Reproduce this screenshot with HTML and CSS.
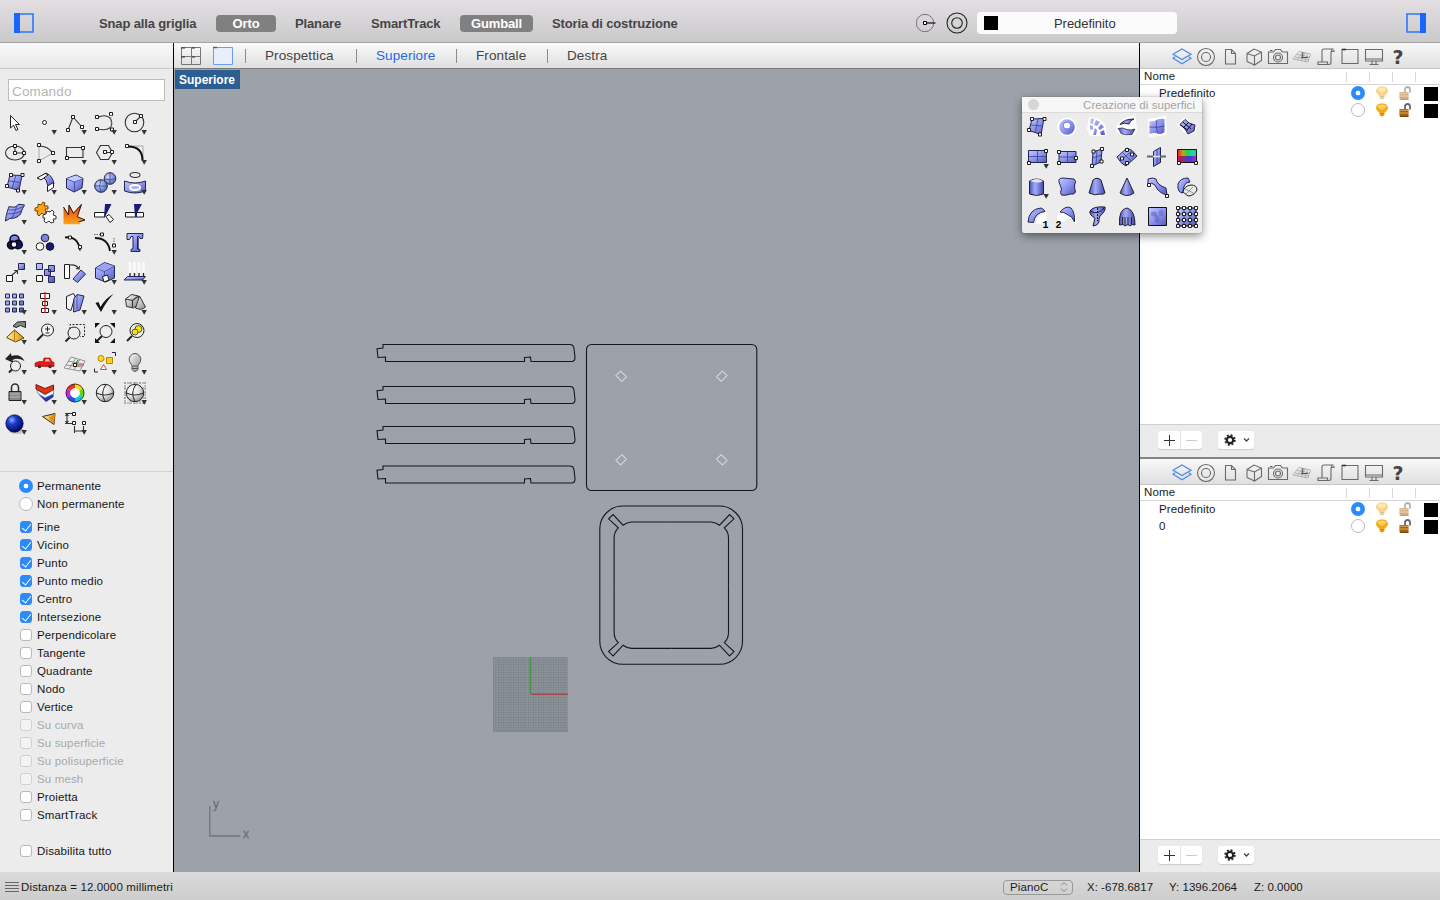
FILE: index.html
```html
<!DOCTYPE html>
<html lang="it">
<head>
<meta charset="utf-8">
<title>Superiore</title>
<link rel="stylesheet" href="styles.css">
</head>
<body>
<svg class="defs" aria-hidden="true">
  <defs>
    <linearGradient id="gb" x1="0" y1="0" x2="1" y2="1"><stop offset="0" stop-color="#c3c8ff"/><stop offset=".5" stop-color="#8d95ee"/><stop offset="1" stop-color="#5058bd"/></linearGradient>
    <linearGradient id="gh" x1="0" y1="0" x2="1" y2="0"><stop offset="0" stop-color="#4b53b5"/><stop offset=".4" stop-color="#a5abfa"/><stop offset="1" stop-color="#4048a8"/></linearGradient>
    <linearGradient id="gg" x1="0" y1="0" x2="1" y2="1"><stop offset="0" stop-color="#fff"/><stop offset="1" stop-color="#888"/></linearGradient>
    <linearGradient id="go" x1="0" y1="0" x2="0" y2="1"><stop offset="0" stop-color="#e23c0c"/><stop offset="1" stop-color="#ffa51d"/></linearGradient>
    <linearGradient id="gy" x1="0" y1="0" x2="1" y2="0"><stop offset="0" stop-color="#fff0a0"/><stop offset="1" stop-color="#dc9200"/></linearGradient>
    <linearGradient id="rainbow"><stop offset="0" stop-color="#f02020"/><stop offset=".3" stop-color="#b0b020"/><stop offset=".5" stop-color="#20d040"/><stop offset=".8" stop-color="#20d8a0"/><stop offset="1" stop-color="#20c0e0"/></linearGradient>
    <linearGradient id="rainbow2"><stop offset="0" stop-color="#e01030"/><stop offset=".45" stop-color="#7030a0"/><stop offset=".7" stop-color="#3040e0"/><stop offset="1" stop-color="#e020c0"/></linearGradient>
    <radialGradient id="ball" cx=".35" cy=".3" r=".7"><stop offset="0" stop-color="#8fb0ff"/><stop offset=".35" stop-color="#1c3fd0"/><stop offset="1" stop-color="#000a60"/></radialGradient>
    <radialGradient id="sph" cx=".35" cy=".35" r=".75"><stop offset="0" stop-color="#c9dcff"/><stop offset="1" stop-color="#4c60c4"/></radialGradient>
    <radialGradient id="gs" cx=".35" cy=".3" r=".8"><stop offset="0" stop-color="#fff"/><stop offset=".5" stop-color="#e4e4e4"/><stop offset="1" stop-color="#888"/></radialGradient>
    <symbol id="tri" viewBox="0 0 30 30"><path d="M21.500 22h5.400l-2.700 4.800z" fill="#333"/></symbol>
    <symbol id="i-layers" viewBox="0 0 22 22"><path d="M11 3l9 5.300-9 5.300-9-5.300zM4.200 10.800L2 12.300l9 5.500 9-5.500-2.200-1.500" fill="none" stroke="#4a87ee" stroke-width="1.200"/></symbol>
    <symbol id="i-ring" viewBox="0 0 22 22"><g class="gs"><circle cx="11" cy="11" r="8.500"/><circle cx="11" cy="11" r="4.500"/></g></symbol>
    <symbol id="i-doc" viewBox="0 0 22 22"><path class="gs" d="M6.500 3.500h6l4 4v10.500H6.500zM12.500 3.500v4h4"/></symbol>
    <symbol id="i-cube" viewBox="0 0 22 22"><path class="gs" d="M4 7.500l7-4.500 7.500 3v8.500l-7 4.500L4 15.500zM4 7.500l7.500 2.500 7-4M11.500 10V19"/></symbol>
    <symbol id="i-cam" viewBox="0 0 22 22"><g class="gs"><path d="M1.500 6h5l2-2.500h5L15.500 6h5v11.500h-19z"/><circle cx="11" cy="11.500" r="4.500"/><circle cx="11" cy="11.500" r="2.500"/><path d="M3 4.500h2.500"/></g></symbol>
    <symbol id="i-plane" viewBox="0 0 22 22"><g fill="none" stroke="#a2a2a2" stroke-width=".8"><path d="M2 13l15 3 2.500-8L8 5.500zM4 11l14 3M6 8.500l13 2.500M6 14l5.500-8M10.500 15l3.500-8.500M14 15.500l2.500-8"/><path d="M11 11.500l1-5M10 11.500l7 0" stroke="#555" stroke-width="1.200"/></g></symbol>
    <symbol id="i-scroll" viewBox="0 0 22 22"><path class="gs" d="M7 15.500V5c0-1.500 1-2 2-2h9.500c-1.500 0-2 1-2 2.500h2.500V4M16 5.500v10.500c0 1.500-1 2.500-2 2.500H3V16h9.500v2.500"/></symbol>
    <symbol id="i-win" viewBox="0 0 22 22"><path class="gs" d="M3 3.500h16v14H3z"/><path d="M3 3.500h4" stroke="#333" stroke-width="1.600"/></symbol>
    <symbol id="i-mon" viewBox="0 0 22 22"><path class="gs" d="M2.500 3.500h17v11.500h-17zM2.500 13h17M9 15v3M13 15v3M6.500 18.500h9"/></symbol>
    <symbol id="bulb" viewBox="0 0 14 16"><path d="M7 1.500c4 0 6 2 6 4.500 0 2.200-2.500 3.500-3.500 5v2L7 14.500 4.500 13v-2C3.500 9.500 1 8.200 1 6c0-2.500 2-4.500 6-4.500z" fill="#f5a71c"/><path d="M7 2.500c3 0 4.500 1 4.500 2.500L7 8 2.500 5C2.500 3.500 4 2.500 7 2.500z" fill="#ffd25d"/><path d="M5 11.500h4M5.500 13.300h3" stroke="#b98a3a"/></symbol>
    <symbol id="lock" viewBox="0 0 14 16"><path d="M7 8V4.500c0-1.500 1-2.500 2.500-2.500S12 3 12 4.500v3" fill="none" stroke="#676778" stroke-width="1.800"/><path d="M1.500 7h9v7.500h-9z" fill="#a86313"/><path d="M1.500 8.300h9M1.500 11h9" stroke="#dca558"/><path d="M2 14.300h8.500" stroke="#603400"/></symbol>
  </defs>
</svg>

<header class="topbar">
  <svg class="side-toggle" viewBox="0 0 20 20"><path d="M1 1h18v18H1z" fill="none" stroke="#2b78fa" stroke-width="1.600"/><path d="M0 0h6v20H0z" fill="#1767ff"/></svg>
  <nav class="modes">
    <span class="m1">Snap alla griglia</span><span class="m2 on">Orto</span><span class="m3">Planare</span><span class="m4">SmartTrack</span><span class="m5 on">Gumball</span><span class="m6">Storia di costruzione</span>
  </nav>
  <svg class="snap-icon" viewBox="0 0 20 20"><circle cx="9" cy="10" r="8.700" fill="none" stroke="#777"/><path d="M10 10h9.500" stroke="#111" stroke-width="1.200"/><path d="M7.500 8.500h3v3h-3z" fill="#fff" stroke="#000"/></svg>
  <svg class="osnap-icon" viewBox="0 0 22 22"><g fill="none" stroke="#222" stroke-width="1.100"><circle cx="11" cy="11" r="10"/><circle cx="11" cy="11" r="5.300"/></g></svg>
  <div class="layer-field"><i class="swatch"></i><span>Predefinito</span></div>
  <svg class="side-toggle right" viewBox="0 0 20 20"><path d="M1 1h18v18H1z" fill="none" stroke="#2b78fa" stroke-width="1.600"/><path d="M14 0h6v20h-6z" fill="#1767ff"/></svg>
</header>

<main class="work">
  <aside class="sidebar">
    <div class="strip"></div>
    <div class="command">Comando</div>
    <div class="tools">
      <svg viewBox="0 0 30 30"><path d="M10.500 7.500v12.500l3-2.800 2.500 5.300 2-1-2.500-5h4z" fill="#fff" stroke="#222"/></svg>
      <svg viewBox="0 0 30 30"><circle class="n" cx="14.500" cy="14.500" r="2"/><use href="#tri"/></svg>
      <svg viewBox="0 0 30 30"><path class="k" d="M8 22l5-13 9 10"/><path class="n" d="M6.500 20.500h3v3h-3zM11.500 7.500h3v3h-3zM20.500 17.500h3v3h-3z"/><use href="#tri"/></svg>
      <svg viewBox="0 0 30 30"><path class="k" d="M7.500 9.500q6-3 10-1c5 2 5.500 9 2 11.500-3 2.500-7 2-12 1"/><path class="n" d="M5.500 7.500h3v3h-3zM19.500 4.500h3v3h-3zM5.500 19.500h3v3h-3z"/><path d="M21 7v14" stroke="#999" stroke-dasharray="1 1"/><path class="n" d="M20.500 20h3v3h-3z"/><use href="#tri"/></svg>
      <svg viewBox="0 0 30 30"><circle class="k" cx="14.500" cy="14.500" r="9.300"/><path class="k" d="M15 14l6-6"/><path class="n" d="M13.500 12.500h3v3h-3zM19.500 6.500h3v3h-3z"/><use href="#tri"/></svg>

      <svg viewBox="0 0 30 30"><ellipse class="k" cx="15" cy="15" rx="9.500" ry="7"/><path class="k" d="M15 8v7h9"/><path class="n" d="M13.500 6.500h3v3h-3zM13.500 13.500h3v3h-3zM22.500 13.500h3v3h-3z"/><use href="#tri"/></svg>
      <svg viewBox="0 0 30 30"><path d="M23 15L9 23V8" fill="none" stroke="#aaa"/><path class="k" d="M9 8c6 0 11 3 13.500 7"/><path class="n" d="M7.500 5.500h3v3h-3zM21.500 13.500h3v3h-3zM7.500 21.500h3v3h-3z"/><use href="#tri"/></svg>
      <svg viewBox="0 0 30 30"><path class="k" d="M6.500 9.500h16.500v10H6.500z"/><path class="n" d="M21.500 8.500h3v3h-3zM5.500 18.500h3v3h-3z"/><use href="#tri"/></svg>
      <svg viewBox="0 0 30 30"><path class="k" d="M10.500 7.500h8l4 7-4 7h-8l-4-7zM15 14.500h7"/><path class="n" d="M13.500 12.500h3v3h-3zM20.500 12.500h3v3h-3z"/><use href="#tri"/></svg>
      <svg viewBox="0 0 30 30"><path d="M8 8h15v15" fill="none" stroke="#aaa"/><path d="M8 8.500c10 0 14.500 5 14.500 14" fill="none" stroke="#111" stroke-width="2"/><path class="n" d="M5.500 6.500h3v3h-3z"/><use href="#tri"/></svg>

      <svg viewBox="0 0 30 30"><path class="b" d="M10 7l12 .500-3 15-12-3.500z"/><path class="t" d="M16 7l-4 14M9 13l12 1.500"/><path class="n" d="M9.500 5.500h3v3h-3zM21 5.500h3v3h-3zM5.500 16.500h3v3h-3zM16.500 21h3v3h-3z"/><use href="#tri"/></svg>
      <svg viewBox="0 0 30 30"><path class="b" d="M12 8l4-3q7 3 8 11l-6 2Q17 11 12 8z"/><path class="n" d="M7 10l8-4.500q2 .5 3 1.500l-7 5q-2-1.500-4-2zM17.500 18l6-3.500v5l-6 4z"/><use href="#tri"/></svg>
      <svg viewBox="0 0 30 30"><path class="b" d="M6.500 10.500L16 7l7 3.500-1 9.500-8 4-7.500-4z"/><path class="t" d="M6.500 11l8 3 8.500-3.500M14.500 14v10"/><path d="M7 10.500L16 7.500l6.500 3-8 3z" fill="#c5c9ff"/><use href="#tri"/></svg>
      <svg viewBox="0 0 30 30"><circle cx="20" cy="10.500" r="5.800" fill="url(#sph)" stroke="#223"/><circle cx="11" cy="18" r="6.300" fill="url(#sph)" stroke="#223"/><path class="t" d="M5 18h12M11 12q-3 6 0 12M14.500 11q6 2 11-.5M20 5v11"/><use href="#tri"/></svg>
      <svg viewBox="0 0 30 30"><ellipse class="k" cx="15" cy="7" rx="5" ry="2.500"/><path class="b" d="M4.500 13q10.500 4 21 0v10q-10.500 4-21 0z"/><ellipse cx="15" cy="19.500" rx="5" ry="2.500" fill="#aab0f8" stroke="#fff" stroke-width="2"/><use href="#tri"/></svg>

      <svg viewBox="0 0 30 30"><path class="b" d="M9 8.500q7 2 9-2 3-.5 6.500.500-2 3-4 9-2 3-6 4-5-.5-9 3 0-5 3.500-14.500z"/><path class="t" d="M7 16q8 0 15-3M17 8l-5 12M8.500 12q7 1 14-3"/><use href="#tri"/></svg>
      <svg viewBox="0 0 30 30"><path d="M5 10l3-1 0-3 3 1 2-3 2 1-1 3 4 0 0 3-3 0 1 3-2 3-2-2-3 3-2-2 1-3-3 0z" fill="#ffa21c" stroke="#7a4600"/><path d="M13 17l3-1 1-3 3 1 2-2 2 2-1 3 3 1 0 3-3 0 1 3-3 1-2-2-3 2-2-2 1-3-2 0z" fill="#fff" stroke="#333"/></svg>
      <svg viewBox="0 0 30 30"><path d="M3.500 26.300V9l5 8L9 7l4.500 8.300 8-9-4.200 12.400 7.700 3.300-6.500 2 2.500 2.300z" fill="url(#go)"/><path d="M3.500 9l5 8L9 7l4.500 8.300 8-9-4.200 12.400 7.700 3.300-6.500 2" fill="none" stroke="#321000"/></svg>
      <svg viewBox="0 0 30 30"><path class="n" d="M4.500 14.500h10.500v4.500H4.500zM16 18.500l3-2 4.500 5-3.500 3z"/><path d="M15 6h6.500l-4 8-3.500 6z" fill="#1b1b78"/></svg>
      <svg viewBox="0 0 30 30"><path class="n" d="M5.500 14.500h18v4.500h-18z"/><path d="M14 6h8l-5 9v4h-2z" fill="#1b1b78"/></svg>

      <svg viewBox="0 0 30 30"><g stroke="#050518" stroke-width="1.500"><circle cx="14.500" cy="11.500" r="4.500" fill="#7c85e8"/><circle cx="11.500" cy="17" r="4" fill="#181860"/><circle cx="18" cy="16.500" r="4.300" fill="#181860"/><circle cx="14" cy="16.500" r="3" fill="#fff"/></g><use href="#tri"/></svg>
      <svg viewBox="0 0 30 30"><circle cx="15" cy="10" r="3.800" fill="#7b83e4" stroke="#222"/><circle cx="10" cy="18.500" r="3.800" fill="#fff" stroke="#222"/><circle cx="20" cy="18.500" r="3.800" fill="#191970" stroke="#111"/></svg>
      <svg viewBox="0 0 30 30"><path d="M5 9.500q13-2 15 13" fill="none" stroke="#111" stroke-width="1.800"/><path class="n" d="M8.500 8h3v3h-3zM18.500 17.500h3v3h-3z"/></svg>
      <svg viewBox="0 0 30 30"><path d="M5 10q13 0 15 13" fill="none" stroke="#111" stroke-width="1.800"/><path d="M4 6.500h9M24 10v7" stroke="#666" stroke-dasharray="1.500 1"/><path class="n" d="M10.500 5h3v3h-3zM22.500 16h3v3h-3z"/><use href="#tri"/></svg>
      <svg viewBox="0 0 30 30"><path class="b" d="M7 5.500h16l-.5 5h-2.500l-1-2h-1.500v12l2.500 1v2h-9v-2l2-1v-12h-2l-1.500 3H7z"/><path d="M18 9.500v12" stroke="#181850" stroke-width="1.300"/></svg>

      <svg viewBox="0 0 30 30"><path class="b" d="M18.500 5.500h6v6h-6z"/><path class="n" d="M6.500 17.500h6v6h-6z"/><path class="k" d="M12 17l5.500-4.500M14 12.500h3.500v3.500"/><use href="#tri"/></svg>
      <svg viewBox="0 0 30 30"><path class="b" d="M6.500 5.500h6v6h-6zM18.500 7.500h6v6h-6zM14.500 11.500h6v6h-6zM18.500 18.500h6v6h-6z"/><path class="n" d="M6.500 17.500h6v6h-6z"/></svg>
      <svg viewBox="0 0 30 30"><path class="n" d="M4.500 6.500h5v14h-5z"/><path class="b" d="M13 21l8-9 4.500 4-8 8.500z"/><path class="k" d="M10 7q6-1 9 4M16 10.500l3 .500 .500-3"/></svg>
      <svg viewBox="0 0 30 30"><path class="b" d="M5.500 10l9-5.500 10 3.500v12l-9 4-10-4z"/><path class="t" d="M5.500 10l9 3.500L24.500 8M14.500 13.500v10"/><path d="M6 10l8.500-5L24 8l-9.500 5z" fill="#9ca3f5"/><path class="n" d="M12.500 18.500l5-1.500 1.500 5-5 2z"/><use href="#tri"/></svg>
      <svg viewBox="0 0 30 30"><path d="M10 4v12M14.500 4v12M19 4v12M23.500 4v12" stroke="#fafafa" stroke-width="2.500"/><path d="M10 15v3M14.500 15v3M19 15v3M23.500 15v3" stroke="#222" stroke-width="1.300"/><path class="b" d="M7.500 18.500h18l-3 3.500H4z"/><use href="#tri"/></svg>

      <svg viewBox="0 0 30 30"><path class="b" d="M5.500 6h4v4h-4zM12.500 6h4v4h-4zM19.500 6h4v4h-4zM5.500 13h4v4h-4zM12.500 13h4v4h-4zM19.500 13h4v4h-4zM5.500 20h4v4h-4zM12.500 20h4v4h-4zM19.500 20h4v4h-4z"/><use href="#tri"/></svg>
      <svg viewBox="0 0 30 30"><path class="n" d="M10.500 5.500h9v5h-9zM12.500 13.500h5v4h-5zM11.500 20.500h7v4h-7z"/><path d="M15 4v21" stroke="#f01414" stroke-width="1.300"/><use href="#tri"/></svg>
      <svg viewBox="0 0 30 30"><path d="M6.500 8.500l7-3 1.500 3-4 14-4.500-2z" fill="#f4f4f4" stroke="#222"/><path class="b" d="M14 10.500l3-4 7 1.500-4 14-6.500 2z"/><path class="t" d="M17 7v14"/><use href="#tri"/></svg>
      <svg viewBox="0 0 30 30"><path d="M5.500 15l3-1 2 5q5-9 13-13-7 7-12.500 18z" fill="#111"/><use href="#tri"/></svg>
      <svg viewBox="0 0 30 30"><path d="M5.500 11l6-4.500 7 1.500v8l-5 4-7-1.500z" fill="url(#gg)" stroke="#333"/><path class="k" d="M5.500 11l7 1.500 6-4.500M12.500 12.500v7"/><path d="M19.500 8l6 11q-4 4-10 1z" fill="url(#gg)" stroke="#333"/><use href="#tri"/></svg>

      <svg viewBox="0 0 30 30"><path d="M6.500 19.500l8-7.500 9.500 8-8.500 4z" fill="url(#gy)" stroke="#654200"/><path d="M14.500 12v12" stroke="#9c6c00" stroke-width=".7"/><path d="M13 8l4.500-4 8-.5v6l-5-2-4.500 2z" fill="#888" stroke="#222"/><use href="#tri"/></svg>
      <svg viewBox="0 0 30 30"><circle cx="17.500" cy="12" r="6" fill="#f5f5f5" stroke="#222"/><path d="M13 16.500l-6 6" stroke="#222" stroke-width="2"/><path d="M15 11h5M17.500 8.500v5M15.500 15h4" stroke="#222"/></svg>
      <svg viewBox="0 0 30 30"><path d="M10 11V6.500h14.500v12H20" fill="none" stroke="#222" stroke-dasharray="2 1.500"/><circle cx="14" cy="15" r="6" fill="none" stroke="#222"/><path d="M9.500 19.500l-4 4" stroke="#222" stroke-width="2"/></svg>
      <svg viewBox="0 0 30 30"><circle cx="16" cy="13.500" r="6" fill="#eee" stroke="#222"/><path d="M12 18l-5 5" stroke="#222" stroke-width="2"/><path d="M5 5h5l-5 5zM25 5h-5l5 5zM25 25h-5l5-5zM5 25v-5l5 5z" fill="#111"/></svg>
      <svg viewBox="0 0 30 30"><circle cx="17" cy="12.500" r="7" fill="#eee" stroke="#222"/><path d="M12 18l-5 5" stroke="#222" stroke-width="2"/><circle cx="18.500" cy="11" r="3.500" fill="#f4e400" stroke="#554"/><circle cx="15" cy="14" r="3" fill="#f4e400" stroke="#554"/></svg>

      <svg viewBox="0 0 30 30"><path d="M5 11l6-6 .5 3q9-3 13 5-7-4-12-1l1 3z" fill="#222"/><circle cx="15.500" cy="18" r="5" fill="#eee" stroke="#222"/><path d="M12 21.500l-3 3" stroke="#222" stroke-width="2"/><use href="#tri"/></svg>
      <svg viewBox="0 0 30 30"><path d="M5 15l4-1.500h4l1-3.500h6l2 3.500 2 1v4H5z" fill="#e81919" stroke="#a00" stroke-width=".6"/><path d="M15 13.500l.7-2.500h3l1.300 2.500z" fill="#f0c0c0"/><circle cx="9.500" cy="18.500" r="1.800" fill="#333"/><circle cx="20" cy="18.500" r="1.800" fill="#333"/><use href="#tri"/></svg>
      <svg viewBox="0 0 30 30"><path d="M4 20l16 3 5-10-14-4zM6 17l16 2M8 13l15 3M9 21l7-11M14 22l6-11" fill="none" stroke="#888" stroke-width=".9"/><path d="M15 17h9" stroke="#f02020"/><path d="M15 17l3-5" stroke="#080"/><path class="n" d="M13.500 15.500h3v3h-3z"/><use href="#tri"/></svg>
      <svg viewBox="0 0 30 30"><circle cx="11" cy="10.500" r="3" fill="#ffd928" stroke="#b88600"/><path d="M16.500 9.500h6v6h-6z" fill="#ffd01b" stroke="#b88600"/><path d="M10.500 21.500l3-5 3 5z" fill="#fff" stroke="#c05a20"/><path d="M22 4.500h3.500V8M4.500 20.500V24H8" fill="none" stroke="#222"/><use href="#tri"/></svg>
      <svg viewBox="0 0 30 30"><path d="M15 5.500a6 6 0 0 1 5.500 8l-2.500 4v4q-3 4-6 0v-4l-2.500-4A6 6 0 0 1 15 5.500z" fill="url(#gg)" stroke="#555"/><path d="M12 18h6M12 20.500h6" stroke="#555"/><use href="#tri"/></svg>

      <svg viewBox="0 0 30 30"><path d="M11.500 14V9.500a3.500 3.500 0 0 1 7 0V14" fill="none" stroke="#333" stroke-width="1.600"/><path d="M9 13.500h12v9H9z" fill="#888" stroke="#222"/><path d="M9.500 16h11M9.500 19h11" stroke="#bbb"/><use href="#tri"/></svg>
      <svg viewBox="0 0 30 30"><path d="M6 6.500l9 4 8.500-3.500v5L15 16 6 11z" fill="#e53215" stroke="#702010"/><path d="M7 12l8 5 8.500-5v4L15 20l-7.500-5z" fill="#f5f5ff" stroke="#555" stroke-width=".6"/><path d="M8 16l7 4 8.500-4v3L16 24z" fill="#2638a5"/><use href="#tri"/></svg>
      <svg viewBox="0 0 30 30"><g fill="none" stroke-width="4.500"><path d="M15 8a7 7 0 0 1 6 3.500" stroke="#ffd800"/><path d="M21 11.500a7 7 0 0 1 0 7" stroke="#60d818"/><path d="M21 18.500a7 7 0 0 1-6 3.500" stroke="#10c9d8"/><path d="M15 22a7 7 0 0 1-6-3.500" stroke="#2450f0"/><path d="M9 18.500a7 7 0 0 1 0-7" stroke="#d020e8"/><path d="M9 11.500A7 7 0 0 1 15 8" stroke="#f33018"/></g><circle cx="15" cy="15" r="9" fill="none" stroke="#222" stroke-width=".8"/><circle cx="15" cy="15" r="4.700" fill="#fff"/><use href="#tri"/></svg>
      <svg viewBox="0 0 30 30"><circle cx="15" cy="15" r="8.700" fill="url(#gs)" stroke="#222"/><path class="k" d="M16 6.500q-6 8-1 17M6.500 15q8 4 17 0"/></svg>
      <svg viewBox="0 0 30 30"><path d="M4 5h22M4 10h22M4 15h22M4 20h22M4 25h22M5 4v22M10 4v22M15 4v22M20 4v22M25 4v22" stroke="#888" stroke-dasharray="2 1"/><circle cx="15" cy="15" r="8.700" fill="url(#gs)" stroke="#222"/><path class="k" d="M16 6.500q-6 8-1 17M6.500 15q8 4 17 0"/><use href="#tri"/></svg>

      <svg viewBox="0 0 30 30"><ellipse cx="17" cy="23" rx="8" ry="3" fill="#999" opacity=".5"/><circle cx="14.500" cy="15.500" r="8.700" fill="url(#ball)" stroke="#001050" stroke-width=".7"/><use href="#tri"/></svg>
      <svg viewBox="0 0 30 30"><path d="M12.500 8.500L25 5.500l-1 11z" fill="url(#gy)" stroke="#333"/><path d="M19 10l6-4-1 10.500z" fill="#e88b12"/><use href="#tri"/></svg>
      <svg viewBox="0 0 30 30"><path class="k" d="M5 5.500h7M5 15.500h7M7 6v9M5.500 8L7 6l1.500 2M5.500 13L7 15l1.500-2M14.500 18v7M23.500 18v7M15 23h8"/><path class="n" d="M12.500 4.500h3v3h-3zM12.500 13.500h3v3h-3zM22.500 13.500h3v3h-3z"/><use href="#tri"/></svg>
    </div>
    <div class="osnap">
      <label class="row"><i class="radio sel"></i>Permanente</label>
      <label class="row gap"><i class="radio"></i>Non permanente</label>
      <label class="row"><i class="check sel"></i>Fine</label>
      <label class="row"><i class="check sel"></i>Vicino</label>
      <label class="row"><i class="check sel"></i>Punto</label>
      <label class="row"><i class="check sel"></i>Punto medio</label>
      <label class="row"><i class="check sel"></i>Centro</label>
      <label class="row"><i class="check sel"></i>Intersezione</label>
      <label class="row"><i class="check"></i>Perpendicolare</label>
      <label class="row"><i class="check"></i>Tangente</label>
      <label class="row"><i class="check"></i>Quadrante</label>
      <label class="row"><i class="check"></i>Nodo</label>
      <label class="row"><i class="check"></i>Vertice</label>
      <label class="row off"><i class="check"></i>Su curva</label>
      <label class="row off"><i class="check"></i>Su superficie</label>
      <label class="row off"><i class="check"></i>Su polisuperficie</label>
      <label class="row off"><i class="check"></i>Su mesh</label>
      <label class="row"><i class="check"></i>Proietta</label>
      <label class="row last"><i class="check"></i>SmartTrack</label>
      <label class="row"><i class="check"></i>Disabilita tutto</label>
    </div>
  </aside>

  <section class="view">
    <div class="tabs">
      <svg class="four" viewBox="0 0 22 20"><path d="M1.500 1.500h19v17h-19zM11.500 1.500v17M1.500 10.500h19" fill="none" stroke="#777"/><path d="M1 2h4M12 2h3M1 11h4M12 11h3" stroke="#333"/></svg>
      <svg class="one" viewBox="0 0 22 20"><path d="M1.500 1.500h19v17h-19z" fill="#e8eefa" stroke="#6d9df0"/><path d="M1 1.500h4" stroke="#245bc8" stroke-width="1.400"/></svg>
      <i class="sep"></i><span class="t1">Prospettica</span><i class="sep"></i><span class="t2">Superiore</span><i class="sep"></i><span class="t3">Frontale</span><i class="sep"></i><span class="t4">Destra</span>
    </div>
    <div class="canvas">
      <svg class="drawing" viewBox="174 69 965 803">
        <defs>
          <pattern id="grid" x="493" y="657" width="2.500" height="2.500" patternUnits="userSpaceOnUse"><path d="M0 .500h2.500M.500 0v2.500" stroke="#7c8288" stroke-width=".7"/></pattern>
          <path id="leg" d="M383 344.500H570q3.500 0 4 4l1 9q0 4-3.500 4H531l-.500-4.500-6 .500v4H385.500v-4.500l-7.500.500-1-8.800 6-.7z"/>
          <path id="slot" d="M671.300 522H711q5 .5 8.500 3.200l10-10.700 4.500 4.300-9.700 9q4.200 4 4.200 10.200V585.200"/>
          <path id="hole" d="M616 375.500l4.500-4.500 6 5.800-4.700 4.700z"/>
        </defs>
        <path d="M493 657h75v75h-75z" fill="#8e959c"/>
        <path d="M493 657h75v75h-75z" fill="url(#grid)"/>
        <path d="M493.500 657v74.500H568" fill="none" stroke="#81878e"/>
        <path d="M530.500 657v37" stroke="#3f9440" stroke-width="1.300"/>
        <path d="M531 694.300h37" stroke="#a6494b" stroke-width="1.600"/>
        <g fill="none" stroke="#15171c" stroke-width="1.100">
          <use href="#leg"/><use href="#leg" y="42"/><use href="#leg" y="82"/><use href="#leg" y="121.500"/>
          <rect x="586.500" y="344.500" width="170.300" height="146" rx="5"/>
          <rect x="599.800" y="506" width="142.700" height="158.300" rx="23"/>
          <use href="#slot"/>
          <use href="#slot" transform="translate(1342.600 0) scale(-1 1)"/>
          <use href="#slot" transform="translate(0 1170.400) scale(1 -1)"/>
          <use href="#slot" transform="translate(1342.600 1170.400) scale(-1 -1)"/>
        </g>
        <g fill="none" stroke="#eef0f3">
          <use href="#hole"/>
          <use href="#hole" transform="translate(1343 0) scale(-1 1)"/>
          <use href="#hole" transform="translate(0 836) scale(1 -1)"/>
          <use href="#hole" transform="translate(1343 836) scale(-1 -1)"/>
        </g>
        <path d="M209.800 806v30h30.500" fill="none" stroke="#6f757c" stroke-width="1.300"/>
        <text class="axis" x="213" y="808">y</text>
        <text class="axis" x="243" y="838">x</text>
      </svg>
      <span class="view-name">Superiore</span>
    </div>
  </section>

  <aside class="panels">
    <section class="panel first">
      <div class="ptabs"><svg><use href="#i-layers"/></svg><svg><use href="#i-ring"/></svg><svg><use href="#i-doc"/></svg><svg><use href="#i-cube"/></svg><svg><use href="#i-cam"/></svg><svg><use href="#i-plane"/></svg><svg><use href="#i-scroll"/></svg><svg><use href="#i-win"/></svg><svg><use href="#i-mon"/></svg><b>?</b></div>
      <div class="thead"><span>Nome</span><i></i><i></i><i></i><i></i></div>
      <div class="trow"><span>Predefinito</span><i class="radio sel"></i><svg class="dim"><use href="#bulb"/></svg><svg class="dim"><use href="#lock"/></svg><i class="sw"></i></div>
      <div class="trow"><span></span><i class="radio"></i><svg><use href="#bulb"/></svg><svg><use href="#lock"/></svg><i class="sw"></i></div>
      <div class="pfoot">
        <div class="addrem"><svg viewBox="0 0 44 18"><path d="M11.500 4v11M6 9.500h11" stroke="#333"/><path d="M22.500 0v18" stroke="#e3e3e3"/><path d="M28 9.500h11" stroke="#ccc"/></svg></div>
        <div class="gear"><svg viewBox="0 0 36 18"><circle cx="12" cy="9" r="3.200" fill="none" stroke="#222" stroke-width="2.200"/><circle cx="12" cy="9" r="4.900" fill="none" stroke="#222" stroke-width="1.600" stroke-dasharray="2 1.850"/><path d="M26 7.500l2.500 2.500 2.500-2.500" fill="none" stroke="#444" stroke-width="1.300"/></svg></div>
      </div>
    </section>
    <section class="panel">
      <div class="ptabs"><svg><use href="#i-layers"/></svg><svg><use href="#i-ring"/></svg><svg><use href="#i-doc"/></svg><svg><use href="#i-cube"/></svg><svg><use href="#i-cam"/></svg><svg><use href="#i-plane"/></svg><svg><use href="#i-scroll"/></svg><svg><use href="#i-win"/></svg><svg><use href="#i-mon"/></svg><b>?</b></div>
      <div class="thead"><span>Nome</span><i></i><i></i><i></i><i></i></div>
      <div class="trow"><span>Predefinito</span><i class="radio sel"></i><svg class="dim"><use href="#bulb"/></svg><svg class="dim"><use href="#lock"/></svg><i class="sw"></i></div>
      <div class="trow"><span>0</span><i class="radio"></i><svg><use href="#bulb"/></svg><svg><use href="#lock"/></svg><i class="sw"></i></div>
      <div class="pfoot">
        <div class="addrem"><svg viewBox="0 0 44 18"><path d="M11.500 4v11M6 9.500h11" stroke="#333"/><path d="M22.500 0v18" stroke="#e3e3e3"/><path d="M28 9.500h11" stroke="#ccc"/></svg></div>
        <div class="gear"><svg viewBox="0 0 36 18"><circle cx="12" cy="9" r="3.200" fill="none" stroke="#222" stroke-width="2.200"/><circle cx="12" cy="9" r="4.900" fill="none" stroke="#222" stroke-width="1.600" stroke-dasharray="2 1.850"/><path d="M26 7.500l2.500 2.500 2.500-2.500" fill="none" stroke="#444" stroke-width="1.300"/></svg></div>
      </div>
    </section>
  </aside>
</main>

<footer class="status">
  <svg class="grip" viewBox="0 0 14 12"><path d="M0 1.500h14M0 4.500h14M0 7.500h14M0 10.500h14" stroke="#666"/></svg>
  <span class="dist">Distanza = 12.0000 millimetri</span>
  <span class="cplane">PianoC<svg viewBox="0 0 8 12"><path d="M1 4.500l3-3 3 3M1 7.500l3 3 3-3" fill="none" stroke="#888"/></svg></span>
  <span class="cx">X: -678.6817</span><span class="cy">Y: 1396.2064</span><span class="cz">Z: 0.0000</span>
</footer>

<div class="palette">
  <div class="ptitle"><i></i><span>Creazione di superfici</span></div>
  <div class="pgrid">
    <svg viewBox="0 0 30 30"><path class="b" d="M10 7l12-.500-3 16-12-4z"/><path class="t" d="M16 7l-3 14M9 13l12 1"/><path class="n" d="M8.500 5.500h3v3h-3zM21 5.500h3v3h-3zM5.500 16.500h3v3h-3zM16.500 21h3v3h-3z"/></svg>
    <svg viewBox="0 0 30 30"><circle cx="15" cy="15" r="9.500" fill="#fff"/><circle cx="15" cy="15" r="7.800" fill="url(#gb)"/><ellipse cx="15" cy="13.500" rx="3.800" ry="3.500" fill="#fff" stroke="#6f77d5"/></svg>
    <svg viewBox="0 0 30 30"><path d="M7 5l9 1 7 6 2 12H8L5 17z" fill="#fff"/><g fill="url(#gb)"><path d="M9 6l3 1-1 5-3-1zM14 8l4 2-3 4-3-1zM19 12l3 3-4 3-2-2zM22 18l1 5h-4l-1-3zM8 13l3 1v4l-3-1zM13 16l2 2-1 5h-3z"/></g></svg>
    <svg viewBox="0 0 30 30"><path d="M5 13Q9 5 24 4v6l1 8-2 5-9 1-9-3-1-5z" fill="#fff"/><path d="M8 12.500Q12 7 22 7q-4 1-5 5-4-2-9 .500z" fill="url(#gh)" stroke="#223"/><path d="M6 16.500q5-1.500 9 1 3 1 8-.500l-3 5.500q-7 1-11-1-1-3-3-5z" fill="url(#gh)" stroke="#223" stroke-width=".7"/></svg>
    <svg viewBox="0 0 30 30"><path d="M6 7l18-3 1 19-18 2z" fill="#fff"/><path d="M7.500 9q4 1 7-1 3-2 8-1v13q-3 3-7 1.500-4-1-8 .500z" fill="url(#gb)"/><path class="t" d="M15 8q-2 7 1 13M7.500 15q8 1 15-1"/></svg>
    <svg viewBox="0 0 30 30"><path d="M5 12l7-6 13 9-2 7-9 1z" fill="#fff"/><path class="b" d="M8 12.500l5-5 4 3.500 6 2-1 6-6 3-3-5z"/><path d="M8 12.500l8 6M11 10l8 7M17 10l-6 6M20 12l-5 6" stroke="#111"/></svg>

    <svg viewBox="0 0 30 30"><path class="b" d="M6.500 8.500h18v12h-18z"/><path class="t" d="M15.500 9v11M7 14.500h17"/><path class="n" d="M22.500 7.500h3v3h-3zM5.500 19.500h3v3h-3z"/><use href="#tri"/></svg>
    <svg viewBox="0 0 30 30"><path class="b" d="M7 9.500h17v11H7z"/><path class="t" d="M15.500 9.500v11M7 15h17"/><path class="n" d="M5.500 8.500h3v3h-3zM22.500 14.500h3v3h-3zM5.500 19.500h3v3h-3z"/></svg>
    <svg viewBox="0 0 30 30"><path class="b" d="M11 10l9-3-1 13-9 4z"/><path class="t" d="M15 8l-1 14M10.500 16l9-3"/><path class="n" d="M10 8h3v3h-3zM18.500 5.500h3v3h-3zM18 18h3v3h-3zM8.500 22.500h3v3h-3z"/></svg>
    <svg viewBox="0 0 30 30"><path class="b" d="M5 15l10-9q5 1 10 8L14 24q-5-2-9-9z"/><path class="t" d="M10 10l9 9M8 19L20 9"/><path class="n" d="M13.500 6.500h3v3h-3zM8.500 15h3v3h-3zM18.500 11h3v3h-3zM13.500 19.500h3v3h-3z"/></svg>
    <svg viewBox="0 0 30 30"><path class="b" d="M11.500 9.500l7-4v15l-7 4z"/><path class="t" d="M15 7.500v15"/><path d="M5 14.500h7M18 14.500h6" stroke="#666" stroke-width="2"/><path d="M11 14.500h7" stroke="#dfe2ff" stroke-width="1.500"/></svg>
    <svg viewBox="0 0 30 30"><path d="M5.500 7.500h19v13h-19z" fill="url(#rainbow)"/><path d="M5.500 14h19v6.500h-19z" fill="url(#rainbow2)"/><path d="M5.500 7.500h19v13h-19z" fill="none" stroke="#111"/><path class="n" d="M5.500 19.500h3v3h-3zM22.500 19.500h3v3h-3z"/></svg>

    <svg viewBox="0 0 30 30"><path d="M7.500 9q7-4 14 0v13q-7 3-14 0z" fill="url(#gh)" stroke="#223"/><path d="M8 9q7-4 13 0-3 2-6 1.500T8 9z" fill="#dfe2ff"/><use href="#tri"/></svg>
    <svg viewBox="0 0 30 30"><path class="b" d="M7 10q-1-4 4-4l11 1q3 2 .500 6 0 4 1 7-1 3-5 2-5 2-9 1-2-2 0-6-1-3-2.500-7z"/></svg>
    <svg viewBox="0 0 30 30"><path d="M11 8q4-3.500 8 0l4 13q-2 2-5 1-5 2-11-1z" fill="url(#gh)" stroke="#223"/></svg>
    <svg viewBox="0 0 30 30"><path d="M15 6l7 15q-7 5-14 0z" fill="url(#gh)" stroke="#223"/></svg>
    <svg viewBox="0 0 30 30"><path class="b" d="M6 7q5-2 8 0 1 6 10 9l1 7q-9-2-12-10-3-3-7-1z"/><path class="n" d="M5.500 11.500h3v3h-3zM23.500 22.500h3v3h-3z"/></svg>
    <svg viewBox="0 0 30 30"><path class="b" d="M6 12q2-6 10-6l2 4q-7 0-7 11-6 0-5-9z"/><path d="M11 20q1-6 8-7 6 0 6 5-3 6-9 6z" fill="#e8e8e8" stroke="#222"/><path d="M13 17q5 2 10 5M14 22l7-7" stroke="#777" stroke-width=".7" fill="none"/></svg>

    <svg viewBox="0 0 30 30"><path d="M14 22q1-9 10-12v12z" fill="#fff"/><path class="b" d="M6 20Q7 7 19 6q3 1 4 3.500-10 1-11.500 11z"/><text class="num" x="20.500" y="25.500">1</text></svg>
    <svg viewBox="0 0 30 30"><path d="M5 17Q7 5 18 5q7 5 6 17l-7-6-12 8z" fill="#fff"/><path class="b" d="M8 10q6-7 11-4 4 4 3.500 14-2-6-8-8-2-2-6.500-2z"/><text class="num" x="3.500" y="25.500">2</text></svg>
    <svg viewBox="0 0 30 30"><path d="M8 9q3-5 15-4 1 4-5 9l-1 3q1 6-6 7l2-8q-6-3-5-7z" fill="url(#gh)" stroke="#223"/><path d="M8 9q8 5 15-4" fill="none" stroke="#223"/><path d="M15.500 6v13" fill="none" stroke="#111" stroke-dasharray="2 1"/></svg>
    <svg viewBox="0 0 30 30"><path d="M7.500 23q-1-16 7.500-17 8 2 8 17l-3-.5-2 1.500-2-1.500-3 1.500-2-1.500z" fill="url(#gh)" stroke="#223"/><path d="M10.500 22v-7M13 23v-8M16 23v-8M19.500 22v-7" stroke="#223"/></svg>
    <svg viewBox="0 0 30 30"><path d="M6.500 5.500h18v18h-18z" fill="url(#gb)" stroke="#111"/><ellipse cx="12" cy="12" rx="3" ry="2.500" fill="#5159b5" opacity=".5"/><ellipse cx="19" cy="11" rx="2.500" ry="3" fill="#4d55b0" opacity=".4"/><ellipse cx="15" cy="17" rx="2.500" ry="4" fill="#4b53ab" opacity=".4"/></svg>
    <svg viewBox="0 0 30 30"><path class="b" d="M6 6h18v18H6z"/><path d="M6 5v20M12 5v20M18 5v20M24 5v20M5 6h20M5 12h20M5 18h20M5 24h20" stroke="#222" stroke-width=".7"/><path class="n" d="M4.500 4.500h3v3h-3zM10.500 4.500h3v3h-3zM16.500 4.500h3v3h-3zM22.500 4.500h3v3h-3zM4.500 10.500h3v3h-3zM10.500 10.500h3v3h-3zM16.500 10.500h3v3h-3zM22.500 10.500h3v3h-3zM4.500 16.500h3v3h-3zM10.500 16.500h3v3h-3zM16.500 16.500h3v3h-3zM22.500 16.500h3v3h-3zM4.500 22.500h3v3h-3zM10.500 22.500h3v3h-3zM16.500 22.500h3v3h-3zM22.500 22.500h3v3h-3z"/></svg>
  </div>
</div>
</body>
</html>
```
FILE: styles.css
```css
* { box-sizing: border-box; }
html, body { margin: 0; height: 100%; }
body {
  width: 1440px; height: 900px; overflow: hidden; position: relative;
  display: flex; flex-direction: column;
  font: 11.5px/14px "Liberation Sans", Arial, sans-serif; letter-spacing: .14px;
  color: #1a1a1a; background: #ececec;
}
svg { display: block; flex: none; }
i { font-style: normal; flex: none; }
span { white-space: nowrap; }
.defs { position: absolute; width: 0; height: 0; }

/* icon paint */
.k { fill: none; stroke: #333; stroke-width: 1.1; }
.t { fill: none; stroke: #3a4190; stroke-width: .8; }
.n { fill: #fff; stroke: #1c1c1c; stroke-width: 1; }
.b { fill: url(#gb); stroke: #23264f; stroke-width: 1; }
.gs { fill: none; stroke: #6a6a6a; stroke-width: 1.1; }
.num { font: bold 10px "Liberation Mono", monospace; letter-spacing: 0; }

/* top bar */
.topbar {
  flex: none; height: 43px; display: flex; align-items: center; padding: 4px 14px 0 14px;
  background: linear-gradient(#e3dfe3, #cacaca); border-bottom: 1px solid #a3a3a3;
}
.side-toggle { width: 20px; height: 20px; }
.side-toggle.right { margin-left: auto; }
.modes { display: flex; align-items: center; font-size: 13px; font-weight: bold; letter-spacing: -.14px; color: #454545; margin-left: 65px; }
.modes span { line-height: 17px; }
.modes .on { background: #808080; color: #fff; border-radius: 4px; text-align: center; }
.m1 { width: 117px; }
.m2 { width: 60px; }
.m3 { margin-left: 19px; width: 76px; }
.m4 { width: 89px; }
.m5 { width: 73px; }
.m6 { margin-left: 19px; width: 130px; }
.snap-icon { width: 20px; height: 20px; margin-left: 234px; }
.osnap-icon { width: 22px; height: 22px; margin-left: 10px; }
.layer-field {
  margin-left: 9px; width: 200px; height: 22px; background: #fbfbfb; border-radius: 4px;
  display: flex; align-items: center; padding-left: 7px; font-size: 13px; letter-spacing: -.05px; color: #333;
}
.layer-field span { margin-left: 56px; padding-top: 1px; }
.swatch { width: 14px; height: 14px; background: #000; }

/* work area */
.work { flex: none; height: 829px; display: flex; }
.sidebar { width: 174px; border-right: 1px solid #000; display: flex; flex-direction: column; }
.strip { height: 26px; flex: none; background: linear-gradient(#f9f9f9, #e9e9e9); border-bottom: 1px solid #c9c9c9; }
.command {
  flex: none; margin: 10px 8px 0; height: 22px; border: 1px solid #bcbcbc; background: #fff;
  font-size: 13.5px; line-height: 23px; letter-spacing: .15px; color: #b5b5b5; padding-left: 3px;
}
.tools { flex: none; display: grid; grid-template-columns: repeat(5, 30px); grid-auto-rows: 30px; margin-top: 7px; height: 363px; }
.tools svg, .pgrid svg { width: 30px; height: 30px; }
.osnap { border-top: 1px solid #d2d2d2; flex: 1; padding: 5px 0 0 19px; }
.row { display: flex; align-items: center; height: 18px; color: #161616; }
.row.gap { margin-bottom: 5px; }
.row.last { margin-bottom: 18px; }
.row.off { color: #a9a9a9; }
.radio { width: 14px; height: 14px; border-radius: 50%; background: #fff; border: 1px solid #b9b9b9; }
.radio.sel { border: 0; background: radial-gradient(circle, #fff 0 2px, #2c8bfb 2.700px); }
.check { width: 12px; height: 12px; border-radius: 3px; background: #fff; border: 1px solid #b9b9b9; margin: 0 1px; }
.off .check { background: #f3f3f3; border-color: #d0d0d0; }
.check.sel { background: #2d8afa; border-color: #2d8afa; display: flex; justify-content: center; align-items: flex-start; }
.check.sel::before { content: ""; width: 4px; height: 8px; border: solid #fff; border-width: 0 1.600px 1.600px 0; transform: rotate(38deg); }
.row i { margin-right: 5px; }
.row .radio { margin-right: 4px; }

.view { width: 965px; display: flex; flex-direction: column; }
.tabs {
  flex: none; height: 26px; display: flex; align-items: center; padding-left: 6px; border-bottom: 1px solid #7c7c7c;
  background: linear-gradient(#fafafa, #dfdfdf); font-size: 13.5px; letter-spacing: .1px; color: #444;
}
.four, .one { width: 22px; height: 20px; }
.one { margin-left: 10px; }
.sep { width: 1px; height: 14px; background: #8b8b8b; }
.one + .sep { margin-left: 11px; }
.t1 { margin-left: 19px; width: 91px; }
.t2 { margin-left: 19px; width: 80px; color: #1f68e8; }
.t3 { margin-left: 19px; width: 71px; }
.t4 { margin-left: 19px; }
.canvas { position: relative; height: 803px; background: #9da2aa; }
.drawing { width: 965px; height: 803px; }
.view-name {
  position: absolute; left: 1px; top: 1px; width: 65px; height: 19px; background: #2d5e91; color: #fff;
  font-weight: bold; font-size: 12px; line-height: 20px; letter-spacing: 0; padding-left: 4px;
}
.axis { font: 12px "Liberation Sans", sans-serif; fill: #6a7078; stroke: #6a7078; stroke-width: .3; }

/* layer panels */
.panels { width: 301px; border-left: 1px solid #000; display: flex; flex-direction: column; }
.panel { height: 413px; background: #fff; display: flex; flex-direction: column; }
.panel.first { height: 416px; border-bottom: 2px solid #858585; }
.ptabs {
  flex: none; height: 26px; display: flex; align-items: center; gap: 2px; padding: 2px 0 0 31px;
  background: linear-gradient(#f8f8f8, #dfdfdf); border-bottom: 1px solid #c4c4c4;
}
.ptabs svg { width: 22px; height: 22px; }
.ptabs b { width: 22px; text-align: center; font: bold 19px/20px "DejaVu Sans", sans-serif; color: #444; letter-spacing: 0; }
.thead { flex: none; height: 16px; display: flex; align-items: center; border-bottom: 1px solid #d5d5d5; padding-left: 4px; }
.thead span { width: 202px; padding-bottom: 1px; }
.thead i { width: 23px; height: 10px; border-left: 1px solid #d8d8d8; }
.trow { flex: none; height: 17px; display: flex; align-items: flex-start; padding-left: 19px; }
.trow span { width: 192px; line-height: 16px; }
.trow .radio { margin-top: 1px; }
.trow svg { width: 14px; height: 16px; margin-left: 10px; }
.trow svg + svg { margin-left: 9px; }
.dim { opacity: .5; }
.sw { width: 14px; height: 14px; background: #000; margin: 2px 0 0 12px; }
.pfoot { margin-top: auto; flex: none; height: 33px; background: #ebebeb; border-top: 1px solid #cfcfcf; display: flex; align-items: center; padding: 0 0 2px 18px; }
.addrem, .gear { height: 18px; background: #fff; border-radius: 3px; box-shadow: 0 1px 1px #ccc; }
.addrem svg { width: 44px; height: 18px; }
.gear svg { width: 36px; height: 18px; }
.gear { margin-left: 16px; }

/* status bar */
.status { flex: none; height: 28px; display: flex; align-items: center; background: linear-gradient(#dadada, #cdcdcd); padding: 2px 0 0 5px; }
.grip { width: 14px; height: 12px; }
.dist { margin-left: 2px; width: 982px; }
.cplane { width: 70px; height: 15px; border: 1px solid #999; border-radius: 4px; display: flex; align-items: center; padding: 0 4px 0 6px; justify-content: space-between; }
.cplane svg { width: 8px; height: 12px; }
.cx, .cy, .cz { letter-spacing: .02px; }
.cx { margin-left: 14px; width: 82px; }
.cy { width: 85px; }

/* floating palette */
.palette {
  position: absolute; left: 1022px; top: 97px; width: 180px; height: 136px; background: #ececec;
  border-radius: 2px; box-shadow: 0 3px 10px rgba(0, 0, 0, .45), 0 0 1px rgba(0, 0, 0, .5);
}
.ptitle { height: 16px; background: #f6f6f6; border-bottom: 1px solid #dadada; display: flex; align-items: center; justify-content: space-between; padding: 0 7px 0 6px; color: #a3a3a3; letter-spacing: .06px; }
.ptitle i { width: 11px; height: 11px; border-radius: 50%; background: #d6d6d6; }
.pgrid { display: grid; grid-template-columns: repeat(6, 30px); grid-auto-rows: 30px; margin-top: -1px; }
```
